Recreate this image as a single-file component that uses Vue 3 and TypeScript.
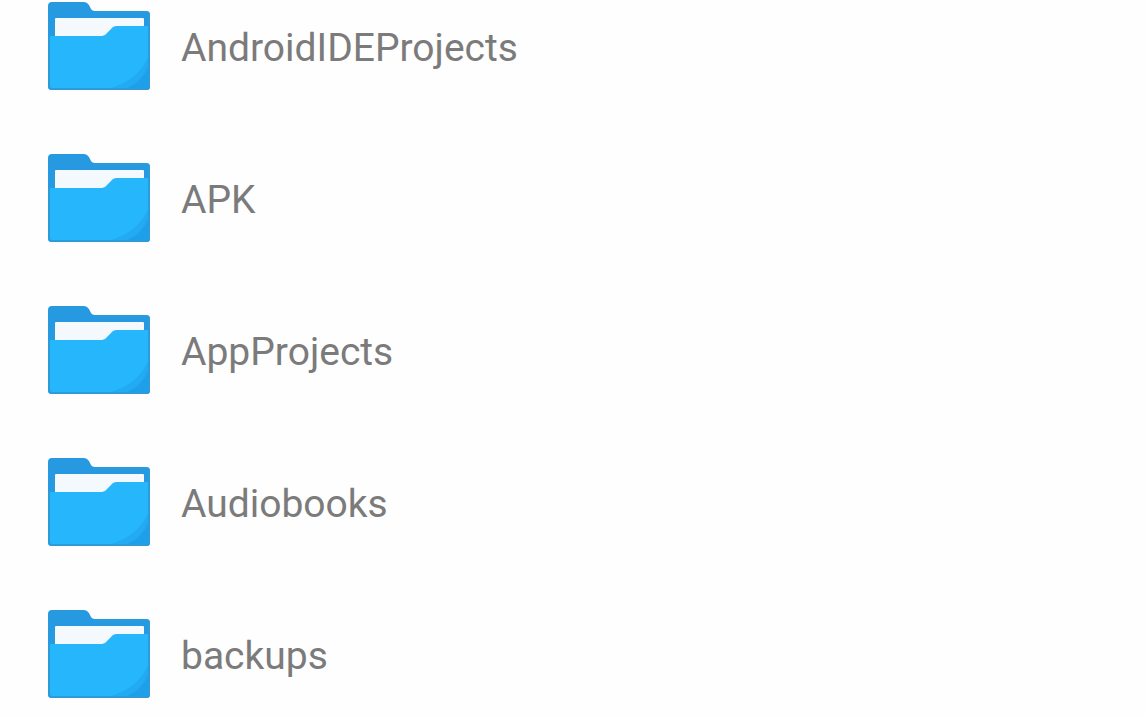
<script setup lang="ts">
interface Folder {
  name: string
}

const folders: Folder[] = [
  { name: 'AndroidIDEProjects' },
  { name: 'APK' },
  { name: 'AppProjects' },
  { name: 'Audiobooks' },
  { name: 'backups' },
]
</script>

<template>
  <main class="browser">
    <ul class="folders">
      <li v-for="folder in folders" :key="folder.name">
        <a class="folder" href="#">
          <svg class="icon" viewBox="0 0 102 88" aria-hidden="true">
            <path
              fill="#2699e0"
              d="M4 0H36Q39 0 41 3L43 7Q44 9 47 9H98Q102 9 102 13V84Q102 88 98 88H4Q0 88 0 84V4Q0 0 4 0Z"
            />
            <path fill="#f3f9fc" d="M8 16H95Q96 16 96 17V40H7V17Q7 16 8 16Z" />
            <path
              fill="#25b6fb"
              d="M0 38Q0 34 4 34H54Q57 34 59 31L63 27Q65 24 69 24H98Q102 24 102 28V84Q102 88 98 88H4Q0 88 0 84Z"
            />
            <path fill="#22aaf2" d="M102 50Q92 80 56 88H98Q102 88 102 84Z" />
            <path fill="#1e9fe9" d="M102 60Q95 82 74 88H98Q102 88 102 84Z" />
            <path
              fill="none"
              stroke="#2b9cd8"
              stroke-width="2"
              d="M1 34V84Q1 87 4 87H98Q101 87 101 84V13Q101 10 98 10H47"
            />
          </svg>
          <span class="name">{{ folder.name }}</span>
        </a>
      </li>
    </ul>
  </main>
</template>

<style scoped>
.browser {
  height: 100vh;
  overflow: hidden;
  background: #fefefe;
  font-family: Roboto, "Liberation Sans", sans-serif;
}

.folders {
  display: flex;
  flex-direction: column;
  gap: 64px;
  margin: 0;
  padding: 2px 48px 0;
  list-style: none;
}

.folder {
  display: flex;
  align-items: center;
  gap: 31px;
  color: #7b7b7b;
  text-decoration: none;
}

.icon {
  flex: none;
  width: 102px;
  height: 88px;
}

.name {
  padding-top: 4px;
  font-size: 39px;
  line-height: 48px;
}
</style>

<style>
body {
  margin: 0;
  background: #fefefe;
}
</style>
